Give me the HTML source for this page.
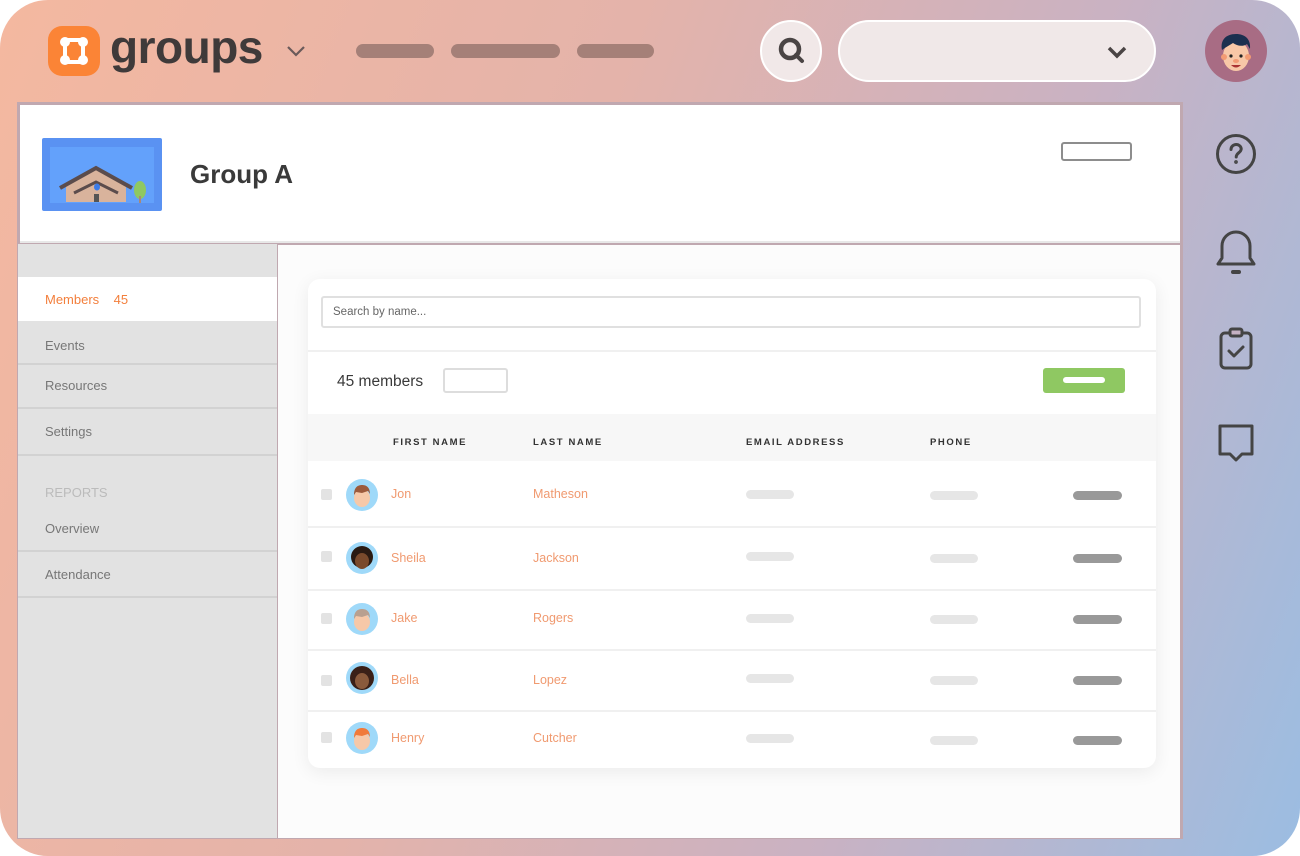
<!DOCTYPE html>
<html><head><meta charset="utf-8"><style>
*{margin:0;padding:0;box-sizing:border-box}
body{width:1300px;height:856px;background:#fff;font-family:"Liberation Sans",sans-serif;overflow:hidden;position:relative}
.frame{position:absolute;left:0;top:0;width:1300px;height:856px;border-radius:48px;background:linear-gradient(110deg,#f4b8a0 0%,#e4b3aa 40%,#c9b2c3 70%,#9bbde2 100%)}
.abs{position:absolute}
.pill{position:absolute;height:14px;border-radius:7px;background:#a58078;top:44px}
.panel{position:absolute;left:17px;top:102px;width:1166px;height:737px;background:#c0a8b0;padding:3px}
.card{position:absolute;left:308px;top:279px;width:848px;height:489px;background:#fff;border-radius:12px;box-shadow:0 4px 18px rgba(0,0,0,.07)}
.th{position:absolute;top:437px;font-size:9.5px;font-weight:bold;letter-spacing:1.6px;color:#333}
.nm{position:absolute;font-size:12.5px;color:#f09a70}
.bar{position:absolute;height:9px;border-radius:5px}
.cb{position:absolute;left:321px;width:11px;height:11px;border-radius:2px;background:#e3e3e3}
.av{position:absolute;left:346px;width:32px;height:32px;border-radius:50%;background:#9fd9f9;overflow:hidden}
.rs{position:absolute;left:308px;width:848px;height:2px;background:#f0f0f0}
</style></head><body>
<div class="frame"></div>
<div class="abs" style="left:48px;top:26px;width:52px;height:50px;border-radius:14px;background:#fb8436"></div>
<svg class="abs" style="left:48px;top:26px" width="52" height="50" viewBox="0 0 52 50"><g fill="#fff"><circle cx="17" cy="16" r="5"/><circle cx="35" cy="16" r="5"/><circle cx="17" cy="34" r="5"/><circle cx="35" cy="34" r="5"/></g><rect x="17" y="14" width="18" height="22" fill="none" stroke="#fff" stroke-width="4"/></svg>
<div class="abs" style="left:110px;top:24px;font-size:46px;line-height:1;font-weight:bold;color:#3f3a3a;letter-spacing:-0.5px">groups</div>
<svg class="abs" style="left:285px;top:44px" width="22" height="14"><path d="M3 3l8 8 8-8" fill="none" stroke="#6a5a5a" stroke-width="2.2"/></svg>
<div class="pill" style="left:356px;width:78px"></div>
<div class="pill" style="left:451px;width:109px"></div>
<div class="pill" style="left:577px;width:77px"></div>
<div class="abs" style="left:760px;top:20px;width:62px;height:62px;border-radius:50%;background:#f1e8e8;border:2px solid #fff"></div>
<svg class="abs" style="left:774px;top:34px" width="34" height="34"><circle cx="16" cy="15" r="9" fill="none" stroke="#4a4444" stroke-width="4.5"/><path d="M22 21l6 6" stroke="#4a4444" stroke-width="4" stroke-linecap="round"/></svg>
<div class="abs" style="left:838px;top:20px;width:318px;height:62px;border-radius:31px;background:#f0e8e8;border:2px solid #fff"></div>
<svg class="abs" style="left:1106px;top:44px" width="22" height="16"><path d="M3 4l8 8 8-8" fill="none" stroke="#4a4444" stroke-width="3.5"/></svg>
<svg class="abs" style="left:1205px;top:20px" width="62" height="62" viewBox="0 0 62 62"><circle cx="31" cy="31" r="31" fill="#a86c84"/><ellipse cx="31" cy="36" rx="13" ry="15" fill="#f8c7a7"/><circle cx="19" cy="37" r="3" fill="#f39b74"/><circle cx="43" cy="37" r="3" fill="#f39b74"/><path d="M17 30c-2-10 4-16 14-16 9 0 15 5 14 15l-3-5c-4 3-10 2-14-1-3 2-7 4-11 7z" fill="#1b2f4f"/><circle cx="26" cy="36" r="1.6" fill="#222"/><circle cx="36" cy="36" r="1.6" fill="#222"/><ellipse cx="31" cy="41" rx="3" ry="2" fill="#f39b74"/><path d="M26 45q5 5 10 0z" fill="#a33"/></svg>
<svg class="abs" style="left:1212px;top:130px" width="48" height="340" viewBox="0 0 48 340" fill="none" stroke="#444" stroke-width="3" stroke-linecap="round" stroke-linejoin="round">
<circle cx="24" cy="24" r="18.5"/><path d="M19 19.5c0-3 2.5-5 5.2-5s5 2 5 4.5c0 3.5-5 4-5 8"/><circle cx="24" cy="32" r=".6" fill="#444" stroke-width="2.5"/>
<path d="M6 134h36l-4-6v-12a14 14 0 0 0-28 0v12z"/><path d="M21 142h6" stroke-width="4"/>
<rect x="9" y="203" width="30" height="35" rx="4"/><rect x="18" y="199" width="12" height="7" rx="2" fill="#c5b1c3"/><path d="M17 221l5 5 9-9"/>
<path d="M8 296h32v28h-10l-6 6-6-6H8z"/>
</svg>
<div class="panel"></div>
<div class="abs" style="left:20px;top:105px;width:1160px;height:138px;background:#fff;border-bottom:2px solid #e8e8e8"></div>
<svg class="abs" style="left:42px;top:138px" width="120" height="73" viewBox="0 0 120 73"><rect width="120" height="73" rx="2" fill="#5a92f2"/><rect x="8" y="9" width="104" height="56" fill="#63a1fb"/><path d="M24 64V48l30-16 30 16v16z" fill="#d9b39c"/><path d="M18 50l36-20 36 20" fill="none" stroke="#5b4c4c" stroke-width="4"/><path d="M32 55l22-11 22 11" fill="none" stroke="#5b4c4c" stroke-width="3"/><ellipse cx="55" cy="49" rx="3" ry="3.5" fill="#3b7be8"/><rect x="52" y="56" width="5" height="8" fill="#555"/><ellipse cx="98" cy="52" rx="6" ry="9" fill="#8fc862"/><rect x="97" y="58" width="2" height="7" fill="#a87"/></svg>
<div class="abs" style="left:190px;top:159px;font-size:26px;font-weight:bold;color:#3a3a3a">Group A</div>
<div class="abs" style="left:1061px;top:142px;width:71px;height:19px;border:2px solid #8d8d8d;border-radius:3px"></div>
<div class="abs" style="left:18px;top:244px;width:259px;height:594px;background:#e2e2e2"></div>
<div class="abs" style="left:18px;top:277px;width:259px;height:44px;background:#fff"></div>
<div class="abs" style="left:45px;top:292px;font-size:13px;color:#f37f3c">Members &nbsp;&nbsp;&nbsp;45</div>
<div class="abs" style="left:45px;top:338px;font-size:13px;color:#777">Events</div>
<div class="abs" style="left:18px;top:363px;width:259px;height:2px;background:#d2d2d2"></div>
<div class="abs" style="left:45px;top:378px;font-size:13px;color:#777">Resources</div>
<div class="abs" style="left:18px;top:407px;width:259px;height:2px;background:#d2d2d2"></div>
<div class="abs" style="left:45px;top:424px;font-size:13px;color:#777">Settings</div>
<div class="abs" style="left:18px;top:454px;width:259px;height:2px;background:#d2d2d2"></div>
<div class="abs" style="left:45px;top:485px;font-size:13px;color:#bbb">REPORTS</div>
<div class="abs" style="left:45px;top:521px;font-size:13px;color:#777">Overview</div>
<div class="abs" style="left:18px;top:550px;width:259px;height:2px;background:#d2d2d2"></div>
<div class="abs" style="left:45px;top:567px;font-size:13px;color:#777">Attendance</div>
<div class="abs" style="left:18px;top:596px;width:259px;height:2px;background:#d2d2d2"></div>
<div class="abs" style="left:278px;top:245px;width:902px;height:593px;background:#fcfcfc"></div>
<div class="card"></div>
<div class="abs" style="left:321px;top:296px;width:820px;height:32px;border:2px solid #e0e0e0;border-radius:3px"></div>
<div class="abs" style="left:333px;top:306px;font-size:11.5px;color:#666">Search by name...</div>
<div class="rs" style="top:350px"></div>
<div class="abs" style="left:337px;top:373px;font-size:15.5px;color:#3a3a3a">45 members</div>
<div class="abs" style="left:443px;top:368px;width:65px;height:25px;border:2px solid #ddd;border-radius:3px"></div>
<div class="abs" style="left:1043px;top:368px;width:82px;height:25px;border-radius:3px;background:#8fc862"></div>
<div class="abs" style="left:1063px;top:377px;width:42px;height:6px;border-radius:3px;background:#fff"></div>
<div class="abs" style="left:308px;top:414px;width:848px;height:47px;background:#f7f7f7"></div>
<div class="th" style="left:393px">FIRST NAME</div>
<div class="th" style="left:533px">LAST NAME</div>
<div class="th" style="left:746px">EMAIL ADDRESS</div>
<div class="th" style="left:930px">PHONE</div>

<div class="cb" style="top:489px"></div><div class="av" style="top:479px"><svg width="32" height="32"><ellipse cx="16" cy="19" rx="8" ry="9" fill="#f6c8a8"/><path d="M8 16c0-8 4-10 8-10s8 2 8 9l-2-3-6 2-6-1z" fill="#9c5a3c"/></svg></div>
<div class="nm" style="left:391px;top:487px">Jon</div><div class="nm" style="left:533px;top:487px">Matheson</div>
<div class="bar" style="left:746px;top:490px;width:48px;background:#e6e6e6"></div><div class="bar" style="left:930px;top:491px;width:48px;background:#e6e6e6"></div><div class="bar" style="left:1073px;top:491px;width:49px;background:#999"></div>
<div class="rs" style="top:526px"></div>

<div class="cb" style="top:551px"></div><div class="av" style="top:542px"><svg width="32" height="32"><circle cx="16" cy="15" r="11" fill="#2a1a12"/><ellipse cx="16" cy="19" rx="7" ry="8" fill="#7a4a2c"/></svg></div>
<div class="nm" style="left:391px;top:551px">Sheila</div><div class="nm" style="left:533px;top:551px">Jackson</div>
<div class="bar" style="left:746px;top:552px;width:48px;background:#e6e6e6"></div><div class="bar" style="left:930px;top:554px;width:48px;background:#e6e6e6"></div><div class="bar" style="left:1073px;top:554px;width:49px;background:#999"></div>
<div class="rs" style="top:589px"></div>

<div class="cb" style="top:613px"></div><div class="av" style="top:603px"><svg width="32" height="32"><ellipse cx="16" cy="19" rx="8" ry="9" fill="#f6c8a8"/><path d="M8 16c0-8 4-10 8-10s8 2 8 9l-2-3-6 2-6-1z" fill="#b8a090"/></svg></div>
<div class="nm" style="left:391px;top:611px">Jake</div><div class="nm" style="left:533px;top:611px">Rogers</div>
<div class="bar" style="left:746px;top:614px;width:48px;background:#e6e6e6"></div><div class="bar" style="left:930px;top:615px;width:48px;background:#e6e6e6"></div><div class="bar" style="left:1073px;top:615px;width:49px;background:#999"></div>
<div class="rs" style="top:649px"></div>

<div class="cb" style="top:675px"></div><div class="av" style="top:662px"><svg width="32" height="32"><circle cx="16" cy="16" r="12" fill="#3a2018"/><ellipse cx="16" cy="19" rx="7" ry="8" fill="#8a5a3c"/></svg></div>
<div class="nm" style="left:391px;top:673px">Bella</div><div class="nm" style="left:533px;top:673px">Lopez</div>
<div class="bar" style="left:746px;top:674px;width:48px;background:#e6e6e6"></div><div class="bar" style="left:930px;top:676px;width:48px;background:#e6e6e6"></div><div class="bar" style="left:1073px;top:676px;width:49px;background:#999"></div>
<div class="rs" style="top:710px"></div>

<div class="cb" style="top:732px"></div><div class="av" style="top:722px"><svg width="32" height="32"><ellipse cx="16" cy="19" rx="8" ry="9" fill="#f6c8a8"/><path d="M8 16c0-8 4-10 8-10s8 2 8 9l-2-3-6 2-6-1z" fill="#f07a3a"/></svg></div>
<div class="nm" style="left:391px;top:731px">Henry</div><div class="nm" style="left:533px;top:731px">Cutcher</div>
<div class="bar" style="left:746px;top:734px;width:48px;background:#e6e6e6"></div><div class="bar" style="left:930px;top:736px;width:48px;background:#e6e6e6"></div><div class="bar" style="left:1073px;top:736px;width:49px;background:#999"></div>
</body></html>
